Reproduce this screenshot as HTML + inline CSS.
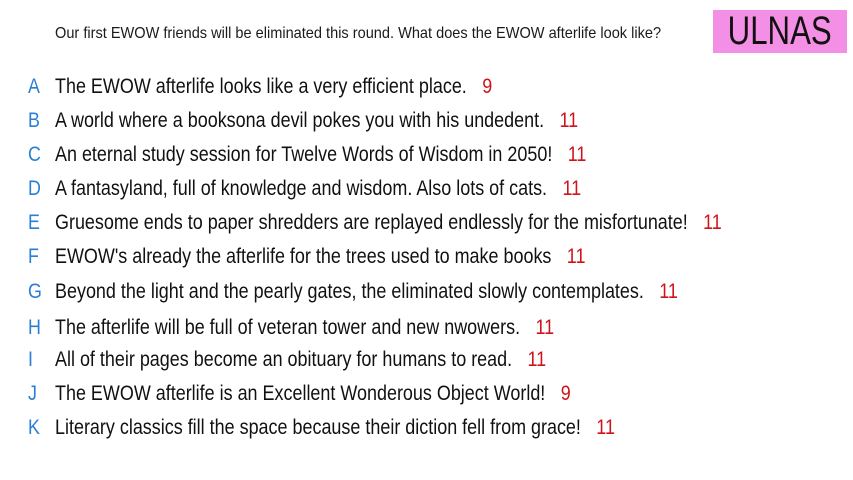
<!DOCTYPE html>
<html><head><meta charset="utf-8"><style>
html,body{margin:0;padding:0;background:#fff;width:853px;height:480px;overflow:hidden;position:relative;font-family:"Liberation Sans Narrow","Liberation Sans",sans-serif;}
.hdr{position:absolute;left:55px;top:25px;font-size:16px;color:#1a1a1a;white-space:nowrap;transform:scaleX(0.91);transform-origin:left center;}
.tag{position:absolute;left:713px;top:10px;width:134px;height:43px;background:#f48fe6;color:#111;font-size:40px;text-align:center;line-height:43px;}
.tag span{display:inline-block;transform:scaleX(0.78);}
.row{position:absolute;left:0;height:24px;line-height:24px;font-size:21px;color:#111;white-space:nowrap;}
.row b{position:absolute;left:28px;font-weight:normal;color:#2a7fd4;transform:scaleX(0.85);transform-origin:left center;}
.row i{position:absolute;left:55px;font-style:normal;transform:scaleX(0.855);transform-origin:left center;}
.row em{font-style:normal;color:#d0121b;margin-left:18px;}
</style></head><body>
<div class="hdr">Our first EWOW friends will be eliminated this round. What does the EWOW afterlife look like?</div>
<div class="tag"><span>ULNAS</span></div>
<div class="row" style="top:75px"><b>A</b><i>The EWOW afterlife looks like a very efficient place.<em>9</em></i></div>
<div class="row" style="top:109px"><b>B</b><i>A world where a booksona devil pokes you with his undedent.<em>11</em></i></div>
<div class="row" style="top:143px"><b>C</b><i>An eternal study session for Twelve Words of Wisdom in 2050!<em>11</em></i></div>
<div class="row" style="top:177px"><b>D</b><i>A fantasyland, full of knowledge and wisdom. Also lots of cats.<em>11</em></i></div>
<div class="row" style="top:211px"><b>E</b><i>Gruesome ends to paper shredders are replayed endlessly for the misfortunate!<em>11</em></i></div>
<div class="row" style="top:245px"><b>F</b><i>EWOW's already the afterlife for the trees used to make books<em>11</em></i></div>
<div class="row" style="top:280px"><b>G</b><i>Beyond the light and the pearly gates, the eliminated slowly contemplates.<em>11</em></i></div>
<div class="row" style="top:316px"><b>H</b><i>The afterlife will be full of veteran tower and new nwowers.<em>11</em></i></div>
<div class="row" style="top:348px"><b>I</b><i>All of their pages become an obituary for humans to read.<em>11</em></i></div>
<div class="row" style="top:382px"><b>J</b><i>The EWOW afterlife is an Excellent Wonderous Object World!<em>9</em></i></div>
<div class="row" style="top:416px"><b>K</b><i>Literary classics fill the space because their diction fell from grace!<em>11</em></i></div>
</body></html>
